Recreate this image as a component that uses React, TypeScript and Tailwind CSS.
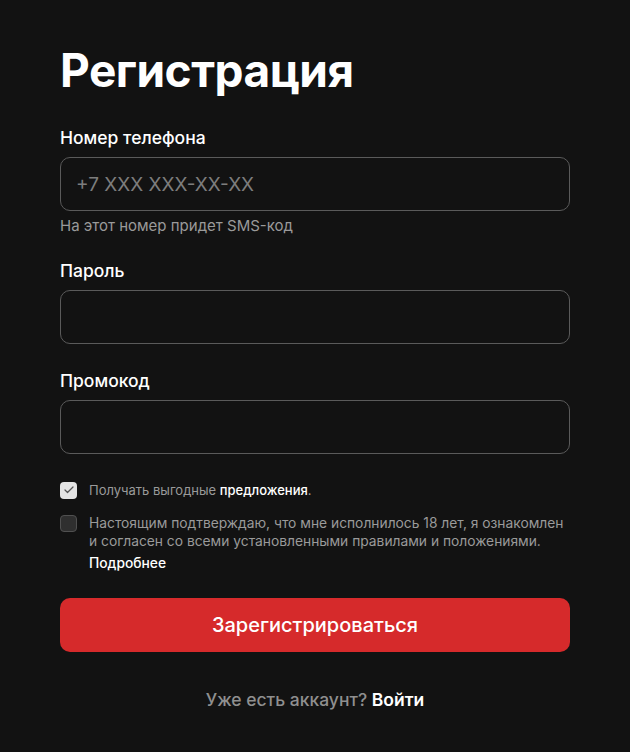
import { Check } from 'lucide-react';

function Field({ label, placeholder, type = 'text' }: { label: string; placeholder?: string; type?: string }) {
  return (
    <label className="block">
      <span className="block text-[17.5px] font-medium leading-6 text-white">{label}</span>
      <input
        type={type}
        placeholder={placeholder}
        className="mt-[7px] block h-[54px] w-full rounded-[10px] border border-[#5a5a5a] bg-transparent px-[15px] text-[19px] text-white outline-none placeholder:text-[#7d7d7d]"
      />
    </label>
  );
}

export default function App() {
  return (
    <div className="min-h-screen bg-[#121212] font-['Inter',sans-serif]">
      <div className="mx-auto w-[510px] pt-[40px] pb-10">
        <h1 className="text-[46px] font-bold leading-[60px] tracking-[-0.5px] text-white">Регистрация</h1>

        <div className="mt-[26px]">
          <Field label="Номер телефона" placeholder="+7 XXX XXX-XX-XX" type="tel" />
          <p className="mt-[5px] text-[15px] leading-5 text-[#9a9a9a]">На этот номер придет SMS-код</p>
        </div>

        <div className="mt-[23px]">
          <Field label="Пароль" type="password" />
        </div>

        <div className="mt-[25px]">
          <Field label="Промокод" />
        </div>

        <div className="mt-[26px] flex items-center gap-3">
          <span className="flex h-[17px] w-[17px] shrink-0 items-center justify-center rounded-[4px] bg-[#e4e4e4]">
            <Check className="h-3 w-3 text-[#555]" strokeWidth={2.5} />
          </span>
          <span className="text-[13px] leading-5 text-[#9a9a9a]">
            Получать выгодные <span className="font-medium text-white">предложения</span>.
          </span>
        </div>

        <div className="mt-[14px] flex items-start gap-3">
          <span className="mt-[1px] h-[17px] w-[17px] shrink-0 rounded-[4px] border border-[#505050] bg-[#2f2f2f]" />
          <div className="text-[13.8px] leading-[18px] text-[#9a9a9a]">
            <p>
              Настоящим подтверждаю, что мне исполнилось 18 лет, я ознакомлен и согласен со всеми установленными
              правилами и положениями.
            </p>
            <p className="mt-1 font-medium text-white">Подробнее</p>
          </div>
        </div>

        <button className="mt-[26px] h-[54px] w-full rounded-[10px] bg-[#d62a2b] text-[20px] font-medium text-white">
          Зарегистрироваться
        </button>

        <p className="mt-[36px] text-center text-[17.5px] font-medium leading-6 text-[#8f8f8f]">
          Уже есть аккаунт? <span className="font-semibold text-white">Войти</span>
        </p>
      </div>
    </div>
  );
}
